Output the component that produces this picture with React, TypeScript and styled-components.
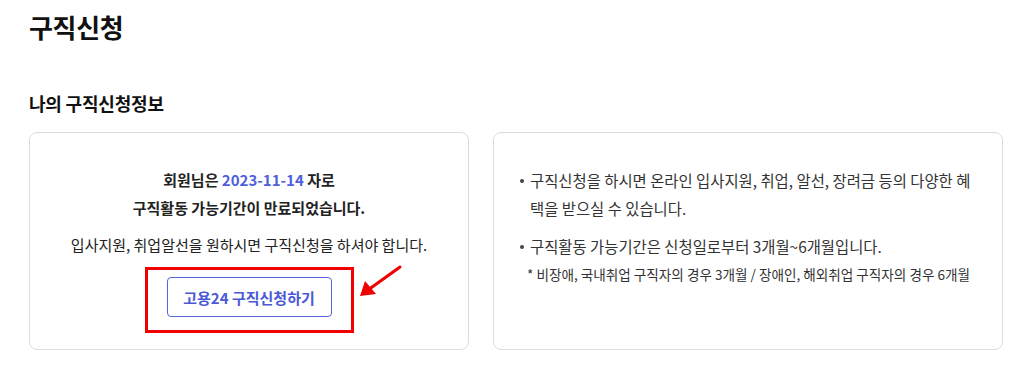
import React from 'react';
import styled, { createGlobalStyle } from 'styled-components';

const GlobalStyle = createGlobalStyle`
  html, body {
    margin: 0;
    padding: 0;
    background: #fff;
  }
  body {
    font-family: "Noto Sans CJK KR", "Noto Sans", sans-serif;
    color: #222;
  }
`;

//styled
const Page = styled.div`
  padding: 8px 22px 0 29px;
`;

const PageTitle = styled.h1`
  margin: 0;
  font-size: 26px;
  font-weight: 700;
  line-height: 38px;
  color: #111;
  letter-spacing: -0.3px;
`;

const SectionTitle = styled.h2`
  margin: 43px 0 0;
  font-size: 18px;
  font-weight: 700;
  line-height: 28px;
  color: #111;
  letter-spacing: -0.2px;
`;

const Cards = styled.div`
  display: grid;
  grid-template-columns: 440px 510px;
  gap: 24px;
  margin-top: 15px;
`;

const Card = styled.div`
  box-sizing: border-box;
  height: 218px;
  border: 1px solid #dcdcdc;
  border-radius: 8px;
`;

const StatusCard = styled(Card)`
  display: flex;
  flex-direction: column;
  align-items: center;
  padding-top: 33px;
  text-align: center;
`;

const Strong = styled.p`
  margin: 0;
  font-size: 15px;
  font-weight: 700;
  line-height: 28px;
  color: #222;
`;

const DateText = styled.span`
  color: #4f5fdc;
`;

const Plain = styled.p`
  margin: 9px 0 0;
  font-size: 15px;
  line-height: 28px;
  color: #222;
`;

const Highlight = styled.div`
  position: relative;
  margin-top: 8px;
  padding: 7px 19px 13px;
  border: 3px solid #f00000;
`;

const ApplyButton = styled.button`
  box-sizing: border-box;
  width: 165px;
  height: 40px;
  border: 1px solid #5566dd;
  border-radius: 4px;
  background: #fff;
  color: #4a5ad6;
  font-family: inherit;
  font-size: 15px;
  font-weight: 700;
  cursor: pointer;
`;

const Arrow = styled.svg`
  position: absolute;
  left: 206px;
  top: -6px;
  width: 52px;
  height: 36px;
`;

const InfoCard = styled(Card)`
  padding: 33px 28px 0 22px;
`;

const InfoList = styled.ul`
  list-style: none;
  margin: 0;
  padding: 0;
`;

const InfoItem = styled.li`
  position: relative;
  padding-left: 14px;
  font-size: 15.4px;
  line-height: 28px;
  color: #333;
  word-break: break-all;
  & + & {
    margin-top: 10px;
  }
  &::before {
    content: "";
    position: absolute;
    left: 4px;
    top: 13px;
    width: 4px;
    height: 4px;
    border-radius: 50%;
    background: #444;
  }
`;

const Note = styled.p`
  margin: 0 0 0 -3px;
  font-size: 13.6px;
  line-height: 28px;
  color: #333;
  white-space: nowrap;
`;

const App: React.FC = () => {
  return (
    <Page>
      <GlobalStyle />
      <PageTitle>구직신청</PageTitle>
      <SectionTitle>나의 구직신청정보</SectionTitle>
      <Cards>
        <StatusCard>
          <Strong>
            회원님은 <DateText>2023-11-14</DateText> 자로
          </Strong>
          <Strong>구직활동 가능기간이 만료되었습니다.</Strong>
          <Plain>입사지원, 취업알선을 원하시면 구직신청을 하셔야 합니다.</Plain>
          <Highlight>
            <ApplyButton>고용24 구직신청하기</ApplyButton>
            <Arrow viewBox="0 0 52 36">
              <line x1="46" y1="3" x2="14" y2="26" stroke="#f00000" strokeWidth="3" strokeLinecap="round" />
              <polygon points="6,32 11,17 22,30" fill="#f00000" />
            </Arrow>
          </Highlight>
        </StatusCard>
        <InfoCard>
          <InfoList>
            <InfoItem>
              구직신청을 하시면 온라인 입사지원, 취업, 알선, 장려금 등의 다양한 혜택을 받으실 수 있습니다.
            </InfoItem>
            <InfoItem>
              구직활동 가능기간은 신청일로부터 3개월~6개월입니다.
              <Note>* 비장애, 국내취업 구직자의 경우 3개월 / 장애인, 해외취업 구직자의 경우 6개월</Note>
            </InfoItem>
          </InfoList>
        </InfoCard>
      </Cards>
    </Page>
  );
};

export default App;
